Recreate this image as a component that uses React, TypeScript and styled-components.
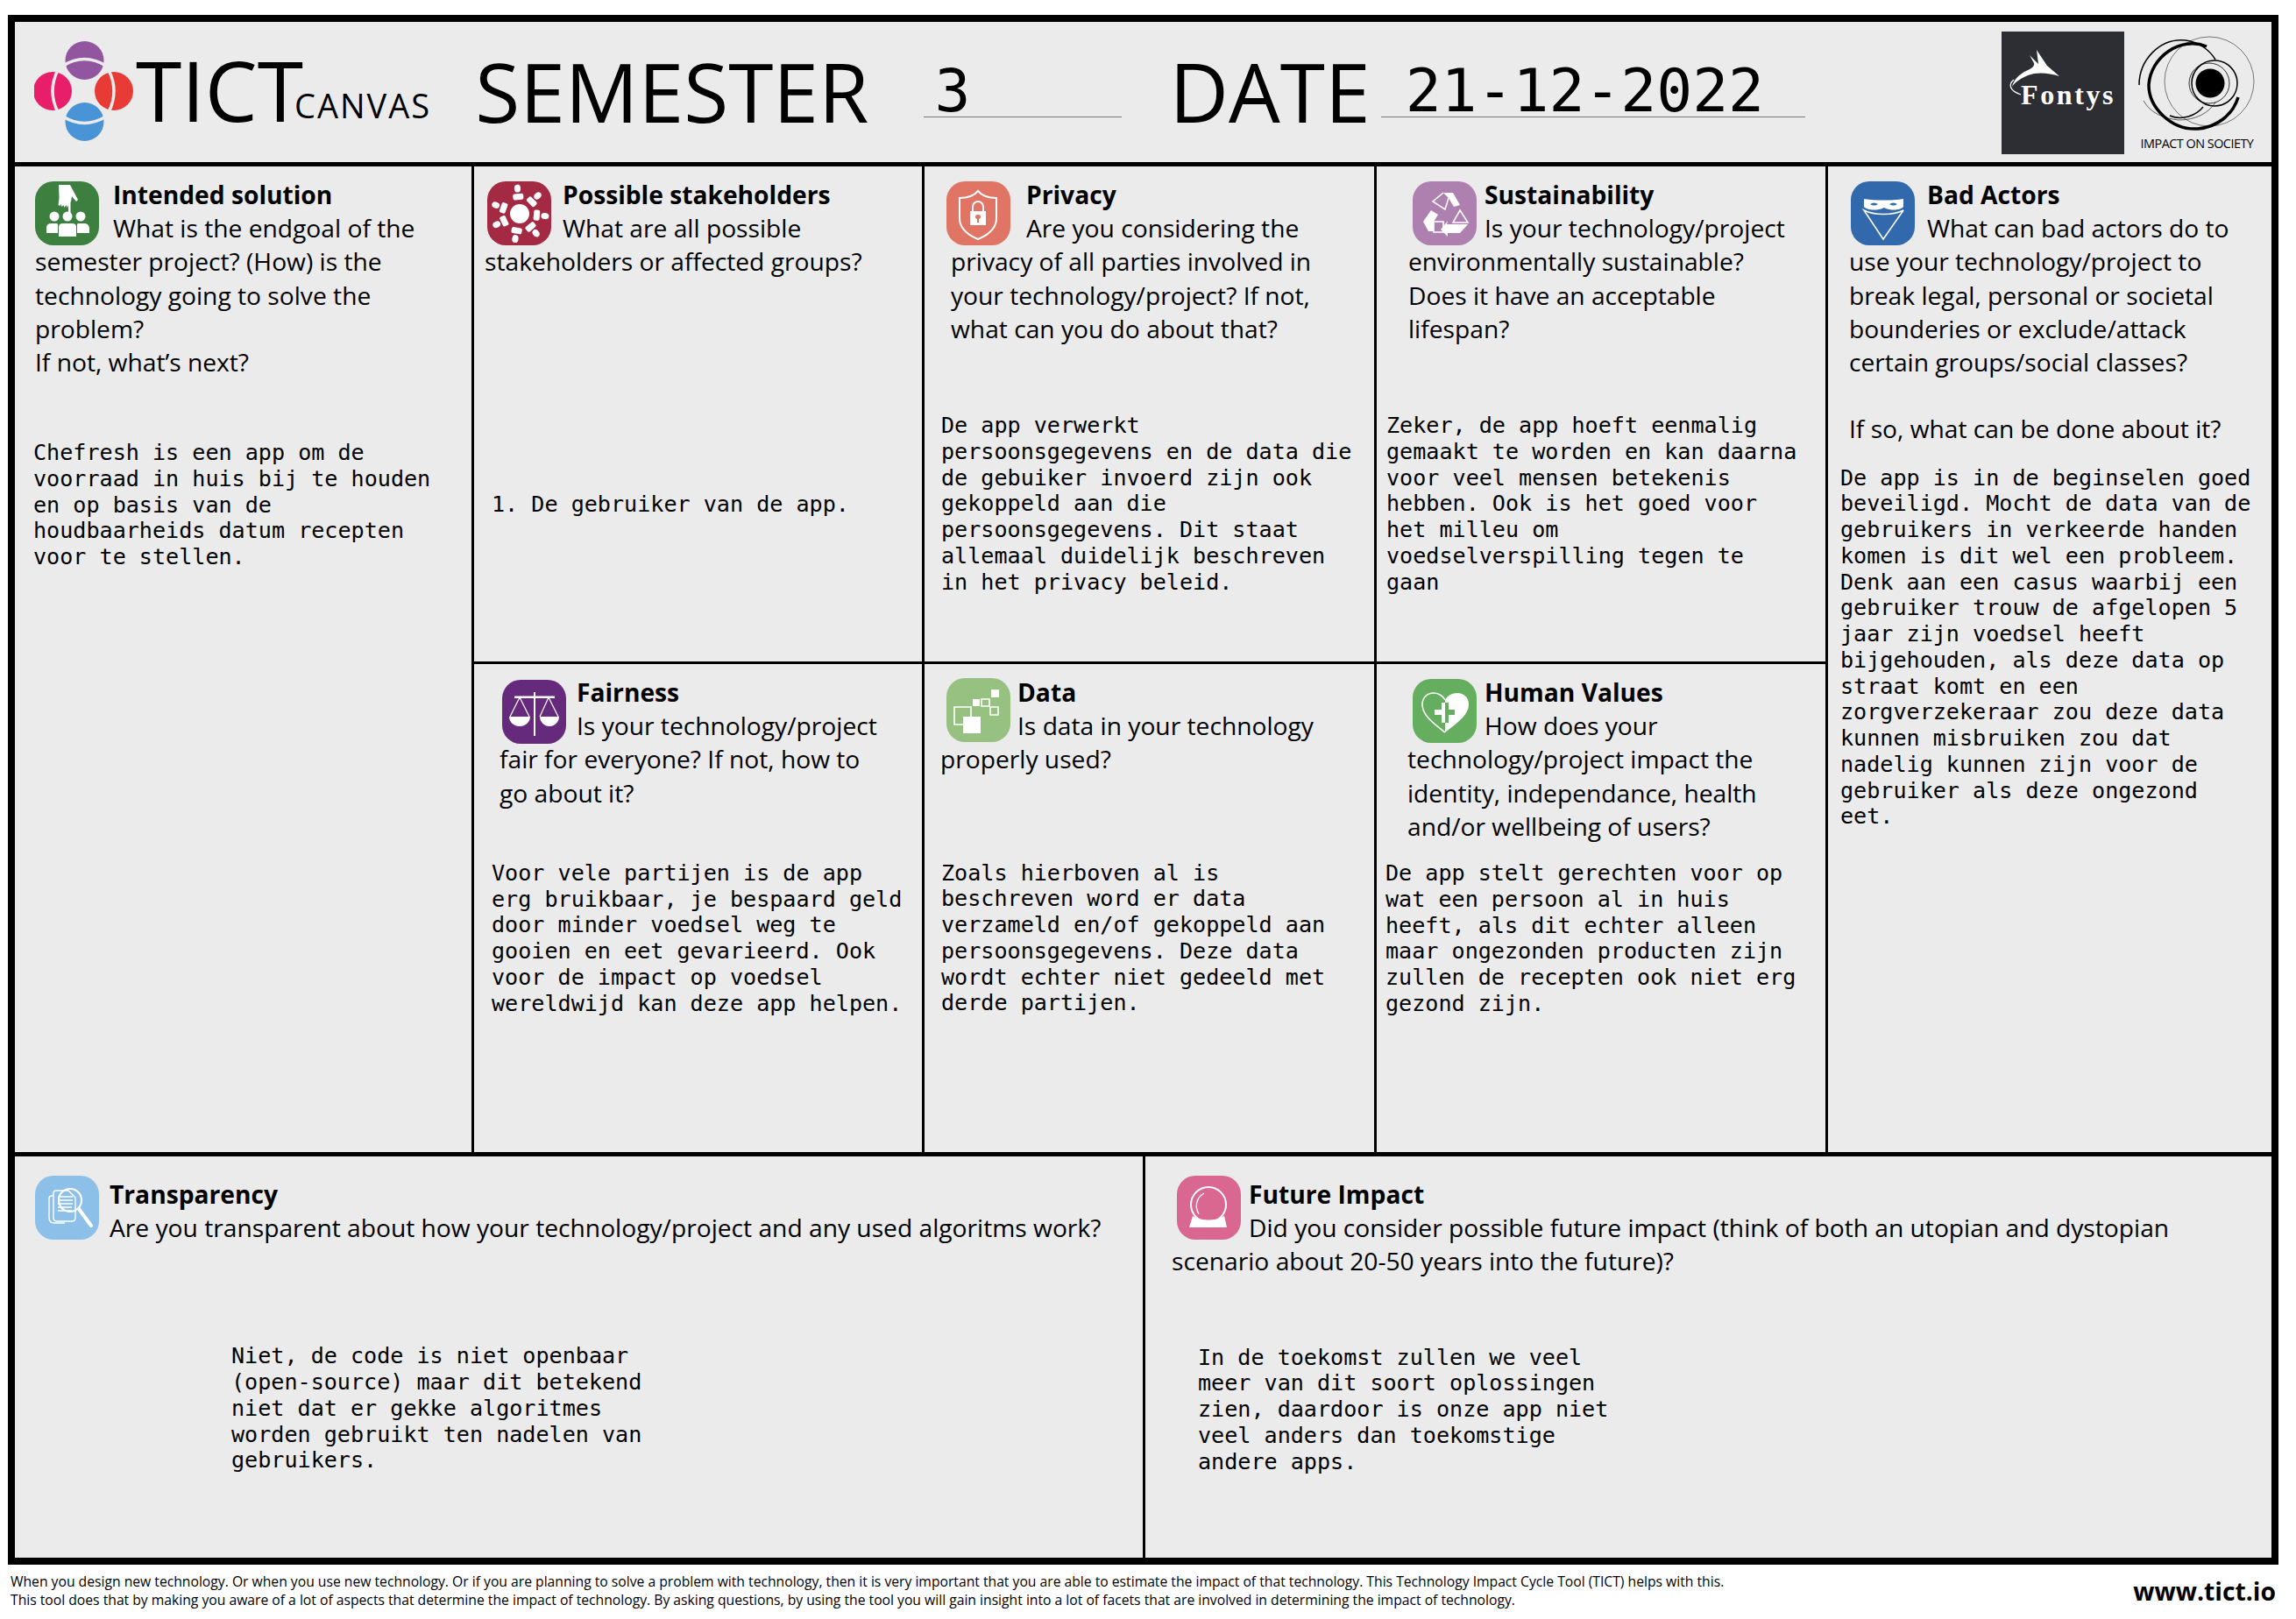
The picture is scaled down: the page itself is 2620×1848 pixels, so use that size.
import React from "react";
import styled, { createGlobalStyle } from "styled-components";

const Global = createGlobalStyle`
  html, body { margin: 0; padding: 0; background: #fff; }
  body { font-family: "Open Sans", "Noto Sans", sans-serif; color: #000; }
`;

const Page = styled.div`
  width: 2620px;
  height: 1848px;
  padding: 17px 0 0 9px;
  box-sizing: border-box;
  overflow: hidden;
`;

const Frame = styled.main`
  width: 2591px;
  height: 1769px;
  box-sizing: border-box;
  border: 8px solid #000;
  background: #ebebeb;
  display: flex;
  flex-direction: column;
`;

const Header = styled.header`
  height: 165px;
  flex: none;
  box-sizing: border-box;
  border-bottom: 5px solid #000;
  display: flex;
  align-items: flex-start;
`;

const BrandMark = styled.svg`
  width: 114px;
  height: 114px;
  flex: none;
  margin: 22px 0 0 22px;
`;

const BrandName = styled.div`
  font-size: 95px;
  line-height: 128px;
  margin: 13px 0 0 2px;
  white-space: nowrap;
`;

const BrandSub = styled.div`
  font-size: 38px;
  line-height: 50px;
  letter-spacing: 2px;
  margin: 70px 0 0 -10px;
  white-space: nowrap;
`;

const HeadLabel = styled.div<{ $ml: number }>`
  font-size: 93px;
  line-height: 128px;
  margin: 15px 0 0 ${(p) => p.$ml}px;
  white-space: nowrap;
`;

const HeadField = styled.div<{ $ml: number; $w: number; $pl: number }>`
  margin: 0 0 0 ${(p) => p.$ml}px;
  width: ${(p) => p.$w}px;
  height: 109px;
  box-sizing: border-box;
  padding: 49px 0 0 ${(p) => p.$pl}px;
  border-bottom: 1px solid #777;
  font-family: "DejaVu Sans Mono", monospace;
  font-size: 68px;
  line-height: 60px;
  white-space: nowrap;
`;

const Logos = styled.div`
  margin-left: auto;
  margin-right: 18px;
  display: flex;
  gap: 16px;
  padding-top: 11px;
`;

const FontysBox = styled.svg`
  width: 140px;
  height: 140px;
  display: block;
`;

const ImpactBox = styled.div`
  width: 134px;
  display: flex;
  flex-direction: column;
  align-items: center;
`;

const ImpactMark = styled.svg`
  width: 134px;
  height: 112px;
  display: block;
  margin-top: 1px;
`;

const ImpactLabel = styled.div`
  font-size: 14.4px;
  line-height: 22px;
  white-space: nowrap;
  letter-spacing: -0.5px;
  margin-top: 4px;
`;

const MainGrid = styled.section`
  height: 1125px;
  flex: none;
  display: grid;
  grid-template-columns: 524px 514px 516px 515px 1fr;
  grid-template-rows: 568px 557px;
`;

const Cell = styled.article<{ $col: number; $row: string; $line?: boolean; $under?: boolean }>`
  grid-column: ${(p) => p.$col};
  grid-row: ${(p) => p.$row};
  box-sizing: border-box;
  padding: 13px 0 0 ${(p) => (p.$col > 1 ? 1 : 0)}px;
  min-width: 0;
  border-right: ${(p) => (p.$line ? "3px solid #000" : "0")};
  border-bottom: ${(p) => (p.$under ? "3px solid #000" : "0")};
`;

const BottomRow = styled.section`
  flex: 1;
  display: grid;
  grid-template-columns: 1290px 1fr;
  border-top: 5px solid #000;
`;

const BottomCell = styled.article<{ $line?: boolean }>`
  padding: 24px 0 0 ${(p) => (p.$line ? 0 : 1)}px;
  box-sizing: border-box;
  min-width: 0;
  border-right: ${(p) => (p.$line ? "3px solid #000" : "0")};
`;

const Question = styled.div<{ $x: number }>`
  margin-left: ${(p) => p.$x}px;
  font-size: 28.2px;
  line-height: 38.2px;
  white-space: pre;
`;

const Title = styled.strong`
  font-weight: 700;
`;

const Badge = styled.div<{ $bg: string; $dx: number; $dy: number; $gap: number }>`
  float: left;
  width: 73px;
  height: 73px;
  border-radius: 21px;
  background: ${(p) => p.$bg};
  margin: ${(p) => p.$dy}px ${(p) => p.$gap}px -6px ${(p) => p.$dx}px;
`;

const BadgeArt = styled.svg`
  width: 73px;
  height: 73px;
  display: block;
`;

const Answer = styled.pre<{ $x: number; $y: number }>`
  margin: ${(p) => p.$y}px 0 0 ${(p) => p.$x}px;
  font-family: "DejaVu Sans Mono", monospace;
  font-size: 25.1px;
  line-height: 29.75px;
`;

const Footer = styled.footer`
  display: flex;
  justify-content: space-between;
  align-items: center;
  margin: 9px 0 0 3px;
  width: 2585px;
`;

const FooterText = styled.div`
  font-size: 15.7px;
  line-height: 21px;
  white-space: pre;
`;

const Site = styled.div`
  font-size: 28.3px;
  font-weight: 700;
  line-height: 36px;
`;

const W = { fill: "#fff" };
const L = { fill: "none", stroke: "#fff", strokeWidth: 1.6 };

const figures = [-5, 45, 95, 140, 190, 245, 290];

const art: Record<string, React.ReactNode> = {
  intended: (
    <>
      <path {...W} d="M27 4h13l9 17-2 2-5-6-1 6-.5 1V38h-2.500V27l-1.500 3-1-3-2 3-1-3-2 2-1-3-1 2-2-1 1-8z" />
      <circle {...W} cx="22" cy="40" r="5.500" />
      <circle {...W} cx="37" cy="40" r="5.500" />
      <circle {...W} cx="52" cy="40" r="5.500" />
      <path {...W} d="M13 59v-6q0-5 6-5h6l1 1v10zM27 63V52q0-4 5-4h10q5 0 5 4v11zM48 59V49l1-1h7q5 0 6 5v6z" />
    </>
  ),
  stakeholders: (
    <>
      <circle {...W} cx="37" cy="37" r="11" />
      {figures.map((a) => (
        <g key={a} transform={`rotate(${a} 37 37)`}>
          <ellipse {...W} cx="37" cy="8" rx="3.600" ry="4.500" />
          <rect {...W} x="31" y="14" width="12" height="7" rx="2" />
        </g>
      ))}
    </>
  ),
  privacy: (
    <>
      <path fill="none" stroke="#fff" strokeWidth="2" d="M36 11c5 6 12 8 21 8v23c0 11-9 19-21 24-12-5-21-13-21-24V19c9 0 16-2 21-8z" />
      <path fill="none" stroke="#fff" strokeWidth="2" d="M30 34v-5a6 6 0 0 1 12 0v5" />
      <path {...W} fillRule="evenodd" d="M27 34h18v16H27zM36 38a2.500 2.500 0 0 0-1 5v4h2v-4a2.500 2.500 0 0 0-1-5z" />
    </>
  ),
  sustain: (
    <>
      <path {...W} d="M35 13h11l8 14-7 2-6-10z" />
      <path {...L} d="M35 13L23 23l14 9 4-13" />
      <path {...W} d="M12 46l9-13 8 5-5 8v11h-6z" />
      <path {...L} d="M24 46h11v12H24z" />
      <path {...L} d="M54 33l9 14H46z" />
      <path {...W} d="M39 49h24l-9 10H40v4l-8-8 8-10z" />
    </>
  ),
  bad: (
    <>
      <path {...W} fillRule="evenodd" d="M15 20c14 2 31 2 45 0v9c-3 4-14 5-22 1-8 4-20 3-23-1zM22 26c3-2 6-2 9 0-3 2-6 2-9 0zM44 26c3-2 6-2 9 0-3 2-6 2-9 0z" />
      <path {...L} d="M15 33c12 6 33 6 45 0L37 66z" />
    </>
  ),
  fairness: (
    <>
      <rect {...W} x="36" y="14" width="2" height="50" />
      <rect {...W} x="14" y="18.500" width="46" height="2.500" />
      <path fill="none" stroke="#fff" strokeWidth="1.200" d="M20 20L9 42M20 20l11 22M53 20L43 42M53 20l11 22" />
      <path {...W} d="M8 42h24c0 6-5 11-12 11S8 48 8 42zM43 42h22c0 6-5 11-11 11s-11-5-11-11z" />
    </>
  ),
  data: (
    <>
      <path {...L} d="M9 33h19v20H9zM40 24h9v8h-9zM50 33h9v9h-9z" />
      <path {...W} d="M19 44h20v19H19zM30 24h8v8h-8zM51 13h9v9h-9z" />
    </>
  ),
  human: (
    <>
      <path {...L} d="M37 61C20 48 11 40 11 29c0-8 6-13 13-13 6 0 11 4 13 8" />
      <path {...W} d="M37 61C54 48 64 40 64 29c0-8-6-13-13-13-7 0-12 4-14 8z" />
      <path {...W} d="M33 27h4v8h0v6h0v9h-4v-9h-8v-6h8z" />
      <path fill="#65ae5f" d="M37 27h4v8h7v6h-7v9h-4z" />
    </>
  ),
  transparency: (
    <>
      <path fill="none" stroke="#fff" strokeWidth="1.400" d="M16 26q0-3 3-3h2M16 26v22q0 6 6 6h12" />
      <path fill="none" stroke="#fff" strokeWidth="1.400" d="M21 20q0-3 3-3h14l8 8v23q0 4-4 4H25q-4 0-4-4z" />
      <path fill="none" stroke="#fff" strokeWidth="1.400" d="M26 24h17M26 28h17M26 32h17M26 36h16M26 40h16" />
      <circle cx="40" cy="28" r="13" fill="none" stroke="#fff" strokeWidth="2.200" />
      <path fill="none" stroke="#fff" strokeWidth="4" strokeLinecap="round" d="M50 38l14 19" />
    </>
  ),
  future: (
    <>
      <circle cx="36" cy="33" r="20" fill="none" stroke="#fff" strokeWidth="2" />
      <path fill="none" stroke="#fff" strokeWidth="1.400" d="M25 44c-5-9-3-19 6-24" />
      <path {...W} d="M18 46c10 6 26 6 36 0l3 13H14z" />
    </>
  ),
};

type Item = {
  key: string;
  col?: number;
  row?: string;
  line?: boolean;
  under?: boolean;
  bg: string;
  x: number;
  dx: number;
  dy: number;
  gap: number;
  title: string;
  body: string;
  mx: number;
  my: number;
  answer: string;
};

const cells: Item[] = [
  {
    key: "intended", col: 1, row: "1 / 3", line: true, bg: "#3d7f3f", x: 23, dx: 0, dy: 4, gap: 16,
    title: "Intended solution",
    body: "What is the endgoal of the\nsemester project? (How) is the\ntechnology going to solve the\nproblem?\nIf not, what’s next?",
    mx: 21, my: 70,
    answer: "Chefresh is een app om de\nvoorraad in huis bij te houden\nen op basis van de\nhoudbaarheids datum recepten\nvoor te stellen.",
  },
  {
    key: "stakeholders", col: 2, row: "1", line: true, under: true, bg: "#a32a42", x: 11, dx: 3, dy: 4, gap: 13,
    title: "Possible stakeholders",
    body: "What are all possible\nstakeholders or affected groups?",
    mx: 19, my: 243,
    answer: "1. De gebruiker van de app.",
  },
  {
    key: "privacy", col: 3, row: "1", line: true, under: true, bg: "#e07565", x: 29, dx: -5, dy: 4, gap: 18,
    title: "Privacy",
    body: "Are you considering the\nprivacy of all parties involved in\nyour technology/project? If not,\nwhat can you do about that?",
    mx: 18, my: 77,
    answer: "De app verwerkt\npersoonsgegevens en de data die\nde gebuiker invoerd zijn ook\ngekoppeld aan die\npersoonsgegevens. Dit staat\nallemaal duidelijk beschreven\nin het privacy beleid.",
  },
  {
    key: "sustain", col: 4, row: "1", line: true, under: true, bg: "#ae80b0", x: 35, dx: 5, dy: 4, gap: 9,
    title: "Sustainability",
    body: "Is your technology/project\nenvironmentally sustainable?\nDoes it have an acceptable\nlifespan?",
    mx: 10, my: 77,
    answer: "Zeker, de app hoeft eenmalig\ngemaakt te worden en kan daarna\nvoor veel mensen betekenis\nhebben. Ook is het goed voor\nhet milleu om\nvoedselverspilling tegen te\ngaan",
  },
  {
    key: "bad", col: 5, row: "1 / 3", bg: "#3269ad", x: 23, dx: 2, dy: 4, gap: 14,
    title: "Bad Actors",
    body: "What can bad actors do to\nuse your technology/project to\nbreak legal, personal or societal\nbounderies or exclude/attack\ncertain groups/social classes?\n\nIf so, what can be done about it?",
    mx: 13, my: 22,
    answer: "De app is in de beginselen goed\nbeveiligd. Mocht de data van de\ngebruikers in verkeerde handen\nkomen is dit wel een probleem.\nDenk aan een casus waarbij een\ngebruiker trouw de afgelopen 5\njaar zijn voedsel heeft\nbijgehouden, als deze data op\nstraat komt en een\nzorgverzekeraar zou deze data\nkunnen misbruiken zou dat\nnadelig kunnen zijn voor de\ngebruiker als deze ongezond\neet.",
  },
  {
    key: "fairness", col: 2, row: "2", line: true, bg: "#652a7c", x: 28, dx: 3, dy: 5, gap: 12,
    title: "Fairness",
    body: "Is your technology/project\nfair for everyone? If not, how to\ngo about it?",
    mx: 19, my: 58,
    answer: "Voor vele partijen is de app\nerg bruikbaar, je bespaard geld\ndoor minder voedsel weg te\ngooien en eet gevarieerd. Ook\nvoor de impact op voedsel\nwereldwijd kan deze app helpen.",
  },
  {
    key: "data", col: 3, row: "2", line: true, bg: "#96c181", x: 17, dx: 7, dy: 3, gap: 8,
    title: "Data",
    body: "Is data in your technology\nproperly used?",
    mx: 18, my: 96,
    answer: "Zoals hierboven al is\nbeschreven word er data\nverzameld en/of gekoppeld aan\npersoonsgegevens. Deze data\nwordt echter niet gedeeld met\nderde partijen.",
  },
  {
    key: "human", col: 4, row: "2", line: true, bg: "#65ae5f", x: 34, dx: 6, dy: 4, gap: 9,
    title: "Human Values",
    body: "How does your\ntechnology/project impact the\nidentity, independance, health\nand/or wellbeing of users?",
    mx: 9, my: 20,
    answer: "De app stelt gerechten voor op\nwat een persoon al in huis\nheeft, als dit echter alleen\nmaar ongezonden producten zijn\nzullen de recepten ook niet erg\ngezond zijn.",
  },
];

const bottoms: Item[] = [
  {
    key: "transparency", line: true, bg: "#8cc0e8", x: 23, dx: 0, dy: -2, gap: 12,
    title: "Transparency",
    body: "Are you transparent about how your technology/project and any used algoritms work?",
    mx: 247, my: 113,
    answer: "Niet, de code is niet openbaar\n(open-source) maar dit betekend\nniet dat er gekke algoritmes\nworden gebruikt ten nadelen van\ngebruikers.",
  },
  {
    key: "future", bg: "#da6790", x: 29, dx: 6, dy: -2, gap: 9,
    title: "Future Impact",
    body: "Did you consider possible future impact (think of both an utopian and dystopian\nscenario about 20-50 years into the future)?",
    mx: 59, my: 76,
    answer: "In de toekomst zullen we veel\nmeer van dit soort oplossingen\nzien, daardoor is onze app niet\nveel anders dan toekomstige\nandere apps.",
  },
];

const Inner = ({ c }: { c: Item }) => (
  <>
    <Question $x={c.x}>
      <Badge $bg={c.bg} $dx={c.dx} $dy={c.dy} $gap={c.gap}>
        <BadgeArt viewBox="0 0 73 73">{art[c.key]}</BadgeArt>
      </Badge>
      <Title>{c.title}</Title>
      {"\n"}
      {c.body}
    </Question>
    <Answer $x={c.mx} $y={c.my}>{c.answer}</Answer>
  </>
);

const Bg = "#ebebeb";

export default function App() {
  return (
    <Page>
      <Global />
      <Frame>
        <Header>
          <BrandMark viewBox="0 0 114 114">
            <circle cx="57.500" cy="22" r="22" fill="#91569f" />
            <circle cx="21" cy="57" r="22" fill="#e91e6a" />
            <circle cx="91" cy="57" r="22" fill="#e83b35" />
            <circle cx="57.500" cy="92" r="22" fill="#4894d6" />
            <g fill="none" stroke={Bg} strokeWidth="3.500">
              <path d="M33 28Q57 13 82 28" />
              <path d="M33 86Q57 101 82 86" />
              <path d="M27 33Q15 57 27 81" />
              <path d="M85 33Q97 57 85 81" />
            </g>
          </BrandMark>
          <BrandName>TICT</BrandName>
          <BrandSub>CANVAS</BrandSub>
          <HeadLabel $ml={50}>SEMESTER</HeadLabel>
          <HeadField $ml={63} $w={226} $pl={12}>3</HeadField>
          <HeadLabel $ml={54}>DATE</HeadLabel>
          <HeadField $ml={12} $w={484} $pl={28}>21-12-2022</HeadField>
          <Logos>
            <FontysBox viewBox="0 0 140 140">
              <rect width="140" height="140" fill="#2d2e33" />
              <path fill="#fff" d="M40 21l12 18 14 12c-12-4-26-5-36-1-7 3-14 7-18 13 2-8 8-14 16-18 6-3 10-5 9-9l-5-9 10 10z" />
              <path fill="none" stroke="#fff" strokeWidth="1.300" d="M14 55c-6 5-6 12 8 17" />
              <text x="22" y="83" fill="#fff" fontFamily="'Liberation Serif', serif" fontWeight="700" fontSize="32" letterSpacing="2.600">Fontys</text>
            </FontysBox>
            <ImpactBox>
              <ImpactMark viewBox="0 0 134 112">
                <g fill="none" stroke="#000">
                  <circle cx="82" cy="58" r="16.500" fill="#000" stroke="none" />
                  <circle cx="87" cy="58" r="26" strokeWidth="1.500" />
                  <circle cx="81" cy="58" r="23" strokeWidth="0.800" />
                  <circle cx="81" cy="56" r="51" strokeWidth="0.500" />
                  <path strokeWidth="3.500" d="M78 16C48 4 14 28 12 60c0 26 26 52 56 50 22-2 40-16 46-36" />
                  <path strokeWidth="1.500" d="M1 60C1 32 24 6 54 9c16 2 28 12 34 22" />
                  <path strokeWidth="1.500" d="M36 95c14 6 30 0 38-10" />
                  <path strokeWidth="0.600" d="M6 78c8 14 22 20 40 22 20 0 34-8 42-20" />
                </g>
              </ImpactMark>
              <ImpactLabel>IMPACT ON SOCIETY</ImpactLabel>
            </ImpactBox>
          </Logos>
        </Header>
        <MainGrid>
          {cells.map((c) => (
            <Cell key={c.key} $col={c.col!} $row={c.row!} $line={c.line} $under={c.under}>
              <Inner c={c} />
            </Cell>
          ))}
        </MainGrid>
        <BottomRow>
          {bottoms.map((c) => (
            <BottomCell key={c.key} $line={c.line}>
              <Inner c={c} />
            </BottomCell>
          ))}
        </BottomRow>
      </Frame>
      <Footer>
        <FooterText>
          {"When you design new technology. Or when you use new technology. Or if you are planning to solve a problem with technology, then it is very important that you are able to estimate the impact of that technology. This Technology Impact Cycle Tool (TICT) helps with this.\nThis tool does that by making you aware of a lot of aspects that determine the impact of technology. By asking questions, by using the tool you will gain insight into a lot of facets that are involved in determining the impact of technology."}
        </FooterText>
        <Site>www.tict.io</Site>
      </Footer>
    </Page>
  );
}
